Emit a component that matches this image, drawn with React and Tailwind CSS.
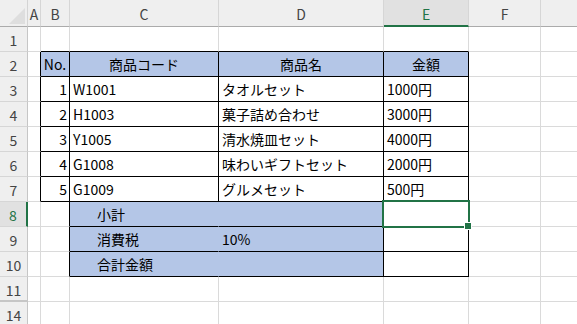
import React from 'react'

const COLS = [
  { key: 'A', w: 'w-[13px]' },
  { key: 'B', w: 'w-[29px]' },
  { key: 'C', w: 'w-[149px]' },
  { key: 'D', w: 'w-[165px]' },
  { key: 'E', w: 'w-[85px]' },
  { key: 'F', w: 'w-[72px]' },
  { key: 'G', w: 'w-[73px]' },
]

const ROWS = [1, 2, 3, 4, 5, 6, 7, 8, 9, 10, 11, 14]

const DATA = {
  2: { B: ['No.', 'center'], C: ['商品コード', 'center'], D: ['商品名', 'center'], E: ['金額', 'center'] },
  3: { B: ['1', 'right'], C: ['W1001'], D: ['タオルセット'], E: ['1000円'] },
  4: { B: ['2', 'right'], C: ['H1003'], D: ['菓子詰め合わせ'], E: ['3000円'] },
  5: { B: ['3', 'right'], C: ['Y1005'], D: ['清水焼皿セット'], E: ['4000円'] },
  6: { B: ['4', 'right'], C: ['G1008'], D: ['味わいギフトセット'], E: ['2000円'] },
  7: { B: ['5', 'right'], C: ['G1009'], D: ['グルメセット'], E: ['500円'] },
  8: { C: ['小計', 'indent'] },
  9: { C: ['消費税', 'indent'], D: ['10%'] },
  10: { C: ['合計金額', 'indent'] },
}

const NONE = { t: false, l: false, b: false, r: false }
const ALL = { t: true, l: true, b: true, r: true }

// black cell borders
function box(r, c) {
  if (r >= 2 && r <= 7 && ['B', 'C', 'D', 'E'].includes(c)) return ALL
  if (r >= 8 && r <= 10) {
    if (c === 'C') return { t: true, l: true, b: true, r: false }
    if (c === 'D') return { t: true, l: false, b: true, r: true }
    if (c === 'E') return ALL
  }
  return NONE
}

function filled(r, c) {
  if (r === 2 && ['B', 'C', 'D', 'E'].includes(c)) return true
  if (r >= 8 && r <= 10 && (c === 'C' || c === 'D')) return true
  return false
}

function nextRow(r) {
  const i = ROWS.indexOf(r)
  return ROWS[i + 1]
}

function Cell({ r, ci }) {
  const c = COLS[ci].key
  const right = COLS[ci + 1]?.key
  const below = nextRow(r)
  let rc = 'border-r-[#dadada]'
  if (box(r, c).r || (right && box(r, right).l)) rc = 'border-r-black'
  else if (filled(r, c) && right && filled(r, right)) rc = 'border-r-[#b4c6e7]'
  let bc = 'border-b-[#dadada]'
  if (box(r, c).b || (below && box(below, c).t)) bc = 'border-b-black'
  else if (filled(r, c) && below && filled(below, c)) bc = 'border-b-[#b4c6e7]'

  const d = DATA[r]?.[c]
  const align = d?.[1]
  let just = 'justify-start pl-[3px]'
  if (align === 'center') just = 'justify-center'
  if (align === 'right') just = 'justify-end pr-[2px]'
  if (align === 'indent') just = 'justify-start pl-[27px]'

  return (
    <div
      className={`${COLS[ci].w} shrink-0 h-full flex items-center whitespace-nowrap border-r border-b ${rc} ${bc} ${just} ${
        filled(r, c) ? 'bg-[#b4c6e7]' : 'bg-white'
      }`}
    >
      {d?.[0]}
    </div>
  )
}

function Corner() {
  return (
    <div className="w-[28px] h-full shrink-0 bg-[#efefef] border-r border-b border-r-[#d4d4d4] border-b-[#ababab] relative">
      <svg width="28" height="27" className="absolute left-0 top-0">
        <polygon points="25,8 25,24 9,24" fill="#dedede" />
      </svg>
    </div>
  )
}

export default function App() {
  return (
    <div
      className="relative w-[577px] h-[324px] overflow-hidden bg-white text-[14px] leading-none text-black"
      style={{ fontFamily: '"Noto Sans CJK JP", "Noto Sans", sans-serif' }}
    >
      {/* column header */}
      <div className="flex h-[27px]">
        <Corner />
        {COLS.map((col) => (
          <div
            key={col.key}
            className={`${col.w} shrink-0 h-full flex items-center justify-center pt-[2px] border-r border-r-[#d6d6d6] ${
              col.key === 'E'
                ? 'bg-[#e1e1e1] text-[#217346] border-b-2 border-b-[#217346]'
                : 'bg-[#efefef] text-[#444] border-b border-b-[#ababab]'
            }`}
          >
            {col.key === 'G' ? '' : col.key}
          </div>
        ))}
      </div>

      {ROWS.map((r) => (
        <div key={r} className="flex h-[25px]">
          <div
            className={`w-[28px] shrink-0 h-full flex items-center justify-center pt-[2px] ${
              r === 11 ? 'border-b-2 border-b-[#c6c6c6]' : 'border-b border-b-[#d6d6d6]'
            } ${
              r === 8
                ? 'bg-[#e1e1e1] text-[#217346] border-r-2 border-r-[#217346]'
                : 'bg-[#efefef] text-[#444] border-r border-r-[#c6c6c6]'
            }`}
          >
            {r}
          </div>
          {COLS.map((col, ci) => (
            <Cell key={col.key} r={r} ci={ci} />
          ))}
        </div>
      ))}

      {/* selection on E8 */}
      <div className="absolute left-[382px] top-[200px] w-[88px] h-[28px] border-2 border-[#217346] pointer-events-none" />
      <div className="absolute left-[465px] top-[223px] w-[6px] h-[6px] bg-[#217346] outline outline-1 outline-white" />
    </div>
  )
}
